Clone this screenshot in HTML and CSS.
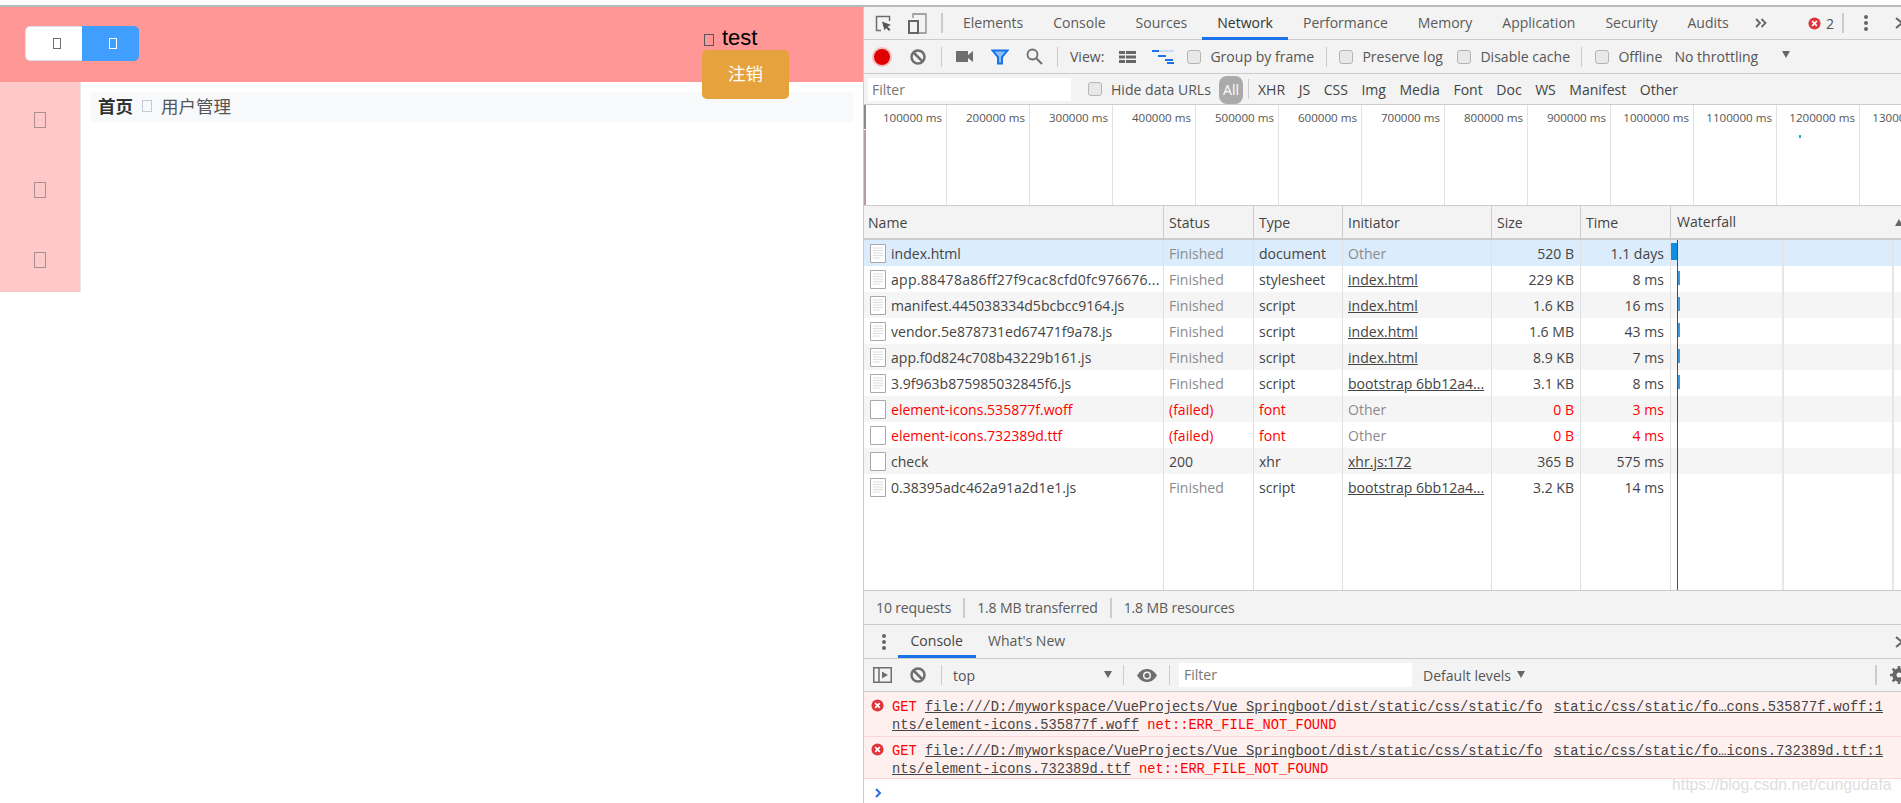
FILE: index.html
```html
<!DOCTYPE html>
<html lang="zh">
<head>
<meta charset="utf-8">
<title>用户管理</title>
<link rel="stylesheet" href="styles.css">
</head>
<body>
<svg class="sprite" aria-hidden="true">
  <symbol id="doc" viewBox="0 0 16 19"><path d="M.5.5h15v18H.5z" fill="#fff" stroke="#a9a9a9"/><path d="M3 4h10M3 6.500h10M3 9h10M3 11.500h10M3 14h7" stroke="#dcdcdc"/></symbol>
  <symbol id="blank" viewBox="0 0 16 19"><path d="M.5.5h15v18H.5z" fill="#fff" stroke="#a9a9a9"/></symbol>
  <symbol id="clear" viewBox="0 0 16 16"><circle cx="8" cy="8" r="6.500" fill="none" stroke="#6e6e6e" stroke-width="2.500"/><path d="M3.500 3.500l9 9" stroke="#6e6e6e" stroke-width="2.500"/></symbol>
  <symbol id="err" viewBox="0 0 14 14"><circle cx="7" cy="7" r="6.500" fill="#e0343c"/><path d="M4.500 4.500l5 5M9.500 4.500l-5 5" stroke="#fff" stroke-width="1.800"/></symbol>
  <symbol id="dots" viewBox="0 0 4 16"><circle cx="2" cy="2" r="2" fill="#666"/><circle cx="2" cy="8" r="2" fill="#666"/><circle cx="2" cy="14" r="2" fill="#666"/></symbol>
  <symbol id="close" viewBox="0 0 10 12"><path d="M1 1l6 5-6 5" fill="none" stroke="#666" stroke-width="2"/></symbol>
</svg>

<div class="topline"></div>
<div class="screen">
  <section class="app">
    <header class="app-head">
      <div class="btn-group">
        <span class="seg seg-white"><i class="tofu tofu-btn"></i></span>
        <span class="seg seg-blue"><i class="tofu tofu-btn tofu-white"></i></span>
      </div>
      <div class="user">
        <div class="user-name"><i class="tofu tofu-user"></i><span>test</span></div>
        <button class="logout">注销</button>
      </div>
    </header>
    <div class="app-body">
      <nav class="side">
        <div class="side-item"><i class="tofu tofu-side"></i></div>
        <div class="side-item"><i class="tofu tofu-side"></i></div>
        <div class="side-item"><i class="tofu tofu-side"></i></div>
      </nav>
      <main class="content">
        <div class="crumb"><b>首页</b><i class="tofu tofu-crumb"></i><span>用户管理</span></div>
      </main>
    </div>
  </section>

  <section class="devtools">
    <div class="bar tabs">
      <svg class="ic-inspect" width="17" height="17" viewBox="0 0 17 17"><path d="M6 15.500H1.500v-14h13V6" fill="none" stroke="#6e6e6e" stroke-width="1.500"/><path d="M7 6.500l9 3.500-3.500 1.500 3 3-1.500 1.500-3-3L9.500 15.500z" fill="#555"/></svg>
      <svg class="ic-device" width="19" height="21" viewBox="0 0 19 21"><path d="M5 5V1h13v19H11" fill="none" stroke="#8a8a8a" stroke-width="1.300"/><rect x="1" y="8" width="9" height="12" fill="none" stroke="#666" stroke-width="2"/></svg>
      <i class="sep sep-tall sep-tabs"></i>
      <span class="tab">Elements</span>
      <span class="tab">Console</span>
      <span class="tab">Sources</span>
      <span class="tab tab-on">Network</span>
      <span class="tab">Performance</span>
      <span class="tab">Memory</span>
      <span class="tab">Application</span>
      <span class="tab">Security</span>
      <span class="tab">Audits</span>
      <svg class="ic-more" width="12" height="10" viewBox="0 0 12 10"><path d="M1 1l4 4-4 4M6.500 1l4 4-4 4" fill="none" stroke="#666" stroke-width="1.800"/></svg>
      <svg class="ic-err-top" width="13" height="13"><use href="#err"/></svg>
      <span class="err-count">2</span>
      <i class="sep sep-tall sep-err"></i>
      <svg class="ic-dots" width="4" height="16"><use href="#dots"/></svg>
      <svg class="ic-close" width="10" height="12"><use href="#close"/></svg>
    </div>

    <div class="bar toolbar">
      <span class="record"></span>
      <svg class="ic-clear" width="16" height="16"><use href="#clear"/></svg>
      <i class="sep sep-clear"></i>
      <svg class="ic-camera" width="17" height="11" viewBox="0 0 17 11"><path d="M0 0h12v11H0zM12 4l5-4v11l-5-4z" fill="#6e6e6e"/></svg>
      <svg class="ic-funnel" width="18" height="16" viewBox="0 0 18 16"><path d="M1.500 1.500h15L11 8v6.500H7V8z" fill="#8fbdf5" stroke="#1a73e8" stroke-width="2"/></svg>
      <svg class="ic-search" width="17" height="17" viewBox="0 0 17 17"><circle cx="6.500" cy="6.500" r="5" fill="none" stroke="#6e6e6e" stroke-width="1.800"/><path d="M10.500 10.500l5.500 5.500" stroke="#6e6e6e" stroke-width="2"/></svg>
      <i class="sep sep-search"></i>
      <span class="lbl lbl-view">View:</span>
      <svg class="ic-list" width="17" height="12" viewBox="0 0 17 12"><path d="M0 0h6v3H0zM7 0h10v3H7zM0 4.500h6v3H0zM7 4.500h10v3H7zM0 9h6v3H0zM7 9h10v3H7z" fill="#666"/></svg>
      <svg class="ic-wf" width="22" height="14" viewBox="0 0 22 14"><path d="M0 0h22v2H0z" fill="#c6dcf8"/><path d="M0 0h7v2H0zM6 5h8v2H6zM13 9h8v2h-8zM15 12h7v2h-7z" fill="#1a73e8"/></svg>
      <label class="check check-group"><i class="box"></i>Group by frame</label>
      <i class="sep sep-group"></i>
      <label class="check check-log"><i class="box"></i>Preserve log</label>
      <label class="check check-cache"><i class="box"></i>Disable cache</label>
      <i class="sep sep-cache"></i>
      <label class="check check-off"><i class="box"></i>Offline</label>
      <span class="lbl lbl-throttle">No throttling</span>
      <i class="tri tri-throttle"></i>
    </div>

    <div class="bar filterbar">
      <span class="input input-net">Filter</span>
      <label class="check check-hide"><i class="box"></i>Hide data URLs</label>
      <span class="all">All</span>
      <i class="sep sep-all"></i>
      <span class="ftype ftype-first">XHR</span><span class="ftype">JS</span><span class="ftype">CSS</span><span class="ftype">Img</span><span class="ftype">Media</span><span class="ftype">Font</span><span class="ftype">Doc</span><span class="ftype">WS</span><span class="ftype">Manifest</span><span class="ftype">Other</span>
    </div>

    <div class="overview">
      <span class="mark mark-gray"></span><span class="mark mark-pink"></span><span class="blip"></span>
      <div class="ov-cell">100000 ms</div><div class="ov-cell">200000 ms</div><div class="ov-cell">300000 ms</div><div class="ov-cell">400000 ms</div><div class="ov-cell">500000 ms</div><div class="ov-cell">600000 ms</div><div class="ov-cell">700000 ms</div><div class="ov-cell">800000 ms</div><div class="ov-cell">900000 ms</div><div class="ov-cell">1000000 ms</div><div class="ov-cell">1100000 ms</div><div class="ov-cell">1200000 ms</div><div class="ov-cell">1300000 ms</div>
    </div>

    <div class="table">
      <div class="row head">
        <div class="c c-name">Name</div><div class="c">Status</div><div class="c">Type</div><div class="c">Initiator</div><div class="c">Size</div><div class="c">Time</div><div class="c c-wf">Waterfall<i class="sort"></i></div>
      </div>
      <div class="rows">
        <span class="wf-line wf-a"></span><span class="wf-line wf-b"></span><span class="wf-load"></span>
        <div class="row sel">
          <div class="c c-name"><svg class="fi" width="16" height="19"><use href="#doc"/></svg>index.html</div><div class="c dim">Finished</div><div class="c">document</div><div class="c dim">Other</div><div class="c num">520 B</div><div class="c num">1.1 days</div><div class="c c-wf"><i class="bar-mark bar-first"></i></div>
        </div>
        <div class="row">
          <div class="c c-name"><svg class="fi" width="16" height="19"><use href="#doc"/></svg><span class="clip">app.88478a86ff27f9cac8cfd0fc976676...</span></div><div class="c dim">Finished</div><div class="c">stylesheet</div><div class="c"><u>index.html</u></div><div class="c num">229 KB</div><div class="c num">8 ms</div><div class="c c-wf"><i class="bar-mark"></i></div>
        </div>
        <div class="row alt">
          <div class="c c-name"><svg class="fi" width="16" height="19"><use href="#doc"/></svg>manifest.445038334d5bcbcc9164.js</div><div class="c dim">Finished</div><div class="c">script</div><div class="c"><u>index.html</u></div><div class="c num">1.6 KB</div><div class="c num">16 ms</div><div class="c c-wf"><i class="bar-mark"></i></div>
        </div>
        <div class="row">
          <div class="c c-name"><svg class="fi" width="16" height="19"><use href="#doc"/></svg>vendor.5e878731ed67471f9a78.js</div><div class="c dim">Finished</div><div class="c">script</div><div class="c"><u>index.html</u></div><div class="c num">1.6 MB</div><div class="c num">43 ms</div><div class="c c-wf"><i class="bar-mark"></i></div>
        </div>
        <div class="row alt">
          <div class="c c-name"><svg class="fi" width="16" height="19"><use href="#doc"/></svg>app.f0d824c708b43229b161.js</div><div class="c dim">Finished</div><div class="c">script</div><div class="c"><u>index.html</u></div><div class="c num">8.9 KB</div><div class="c num">7 ms</div><div class="c c-wf"><i class="bar-mark"></i></div>
        </div>
        <div class="row">
          <div class="c c-name"><svg class="fi" width="16" height="19"><use href="#doc"/></svg>3.9f963b875985032845f6.js</div><div class="c dim">Finished</div><div class="c">script</div><div class="c"><u>bootstrap 6bb12a4...</u></div><div class="c num">3.1 KB</div><div class="c num">8 ms</div><div class="c c-wf"><i class="bar-mark"></i></div>
        </div>
        <div class="row alt fail">
          <div class="c c-name"><svg class="fi" width="16" height="19"><use href="#blank"/></svg>element-icons.535877f.woff</div><div class="c">(failed)</div><div class="c">font</div><div class="c dim">Other</div><div class="c num">0 B</div><div class="c num">3 ms</div><div class="c c-wf"></div>
        </div>
        <div class="row fail">
          <div class="c c-name"><svg class="fi" width="16" height="19"><use href="#blank"/></svg>element-icons.732389d.ttf</div><div class="c">(failed)</div><div class="c">font</div><div class="c dim">Other</div><div class="c num">0 B</div><div class="c num">4 ms</div><div class="c c-wf"></div>
        </div>
        <div class="row alt">
          <div class="c c-name"><svg class="fi" width="16" height="19"><use href="#blank"/></svg>check</div><div class="c">200</div><div class="c">xhr</div><div class="c"><u>xhr.js:172</u></div><div class="c num">365 B</div><div class="c num">575 ms</div><div class="c c-wf"></div>
        </div>
        <div class="row">
          <div class="c c-name"><svg class="fi" width="16" height="19"><use href="#doc"/></svg>0.38395adc462a91a2d1e1.js</div><div class="c dim">Finished</div><div class="c">script</div><div class="c"><u>bootstrap 6bb12a4...</u></div><div class="c num">3.2 KB</div><div class="c num">14 ms</div><div class="c c-wf"></div>
        </div>
        <div class="row filler">
          <div class="c c-name"></div><div class="c"></div><div class="c"></div><div class="c"></div><div class="c"></div><div class="c"></div><div class="c c-wf"></div>
        </div>
      </div>
    </div>

    <div class="bar summary">
      <span class="sum">10 requests</span><i class="sep sep-sum"></i><span class="sum">1.8 MB transferred</span><i class="sep sep-sum"></i><span class="sum">1.8 MB resources</span>
    </div>

    <div class="bar drawer">
      <svg class="ic-dots-d" width="4" height="16"><use href="#dots"/></svg>
      <span class="dtab dtab-on">Console</span>
      <span class="dtab">What's New</span>
      <svg class="ic-close-d" width="10" height="12"><use href="#close"/></svg>
    </div>

    <div class="bar contool">
      <svg class="ic-sidebar" width="19" height="16" viewBox="0 0 19 16"><path d="M.750.750h17.500v14.500H.750zM6 .750v14.500" fill="none" stroke="#6e6e6e" stroke-width="1.500"/><path d="M9 4.500l6 3.500-6 3.500z" fill="#6e6e6e"/></svg>
      <svg class="ic-clear ic-clear-c" width="16" height="16"><use href="#clear"/></svg>
      <i class="sep sep-clear"></i>
      <span class="lbl lbl-top">top</span>
      <i class="tri tri-top"></i>
      <i class="sep sep-top"></i>
      <svg class="ic-eye" width="20" height="13" viewBox="0 0 20 13"><path d="M0 6.500C3 2 6 0 10 0s7 2 10 6.500C17 11 14 13 10 13S3 11 0 6.500z" fill="#6e6e6e"/><circle cx="10" cy="6.500" r="4" fill="#f3f3f3"/><circle cx="10" cy="6.500" r="2.500" fill="#6e6e6e"/></svg>
      <i class="sep sep-eye"></i>
      <span class="input input-con">Filter</span>
      <span class="lbl lbl-levels">Default levels</span>
      <i class="tri tri-levels"></i>
      <i class="sep sep-gear"></i>
      <svg class="ic-gear" width="18" height="18" viewBox="0 0 18 18"><circle cx="9" cy="9" r="5" fill="none" stroke="#666" stroke-width="3.500"/><path d="M9 0v18M0 9h18M2.600 2.600l12.800 12.800M15.400 2.600L2.600 15.400" stroke="#666" stroke-width="2.500"/><circle cx="9" cy="9" r="2.500" fill="#f3f3f3"/></svg>
    </div>

    <div class="console">
      <div class="msg msg-first">
        <svg class="ic-err" width="13" height="13"><use href="#err"/></svg>
        <div class="msg-body">
          <div class="msg-line"><span><span class="red">GET</span> <u>file:///D:/myworkspace/VueProjects/Vue_Springboot/dist/static/css/static/fo</u></span><u>static/css/static/fo…cons.535877f.woff:1</u></div>
          <div><u>nts/element-icons.535877f.woff</u> <span class="red">net::ERR_FILE_NOT_FOUND</span></div>
        </div>
      </div>
      <div class="msg">
        <svg class="ic-err" width="13" height="13"><use href="#err"/></svg>
        <div class="msg-body">
          <div class="msg-line"><span><span class="red">GET</span> <u>file:///D:/myworkspace/VueProjects/Vue_Springboot/dist/static/css/static/fo</u></span><u>static/css/static/fo…icons.732389d.ttf:1</u></div>
          <div><u>nts/element-icons.732389d.ttf</u> <span class="red">net::ERR_FILE_NOT_FOUND</span></div>
        </div>
      </div>
      <div class="prompt">
        <svg width="7" height="10" viewBox="0 0 7 10"><path d="M1 1l4 4-4 4" fill="none" stroke="#2a6fdb" stroke-width="2"/></svg>
      </div>
      <span class="watermark">https://blog.csdn.net/cungudafa</span>
    </div>
  </section>
</div>
</body>
</html>
```

FILE: styles.css
```css
* { box-sizing: border-box; }
html, body { margin: 0; padding: 0; }
body {
  width: 1901px;
  height: 803px;
  overflow: hidden;
  background: #fff;
  font-family: "Open Sans", "Noto Sans", "Noto Sans CJK SC", sans-serif;
}
.sprite { display: none; }
i { font-style: normal; }

.topline { height: 7px; border-bottom: 2px solid #bbb; margin-top: 0; }
.screen { display: flex; height: 796px; }

/* ---------- left app ---------- */
.app { flex: 0 0 863px; font-family: "Noto Sans CJK SC", "Noto Sans", sans-serif; }
.app-head {
  height: 75px;
  background: #ff9797;
  display: flex;
  align-items: flex-start;
  padding: 19px 74px 0 25px;
}
.btn-group {
  display: flex;
  width: 114px;
  height: 35px;
  border-radius: 5px;
  overflow: hidden;
}
.seg { display: flex; align-items: center; justify-content: center; height: 35px; }
.seg-white { width: 57px; background: #fff; border: 1px solid #dcdfe6; border-right: 0; border-radius: 5px 0 0 5px; padding-left: 6px; }
.seg-blue { width: 57px; background: #409eff; padding-left: 5px; }
.tofu { display: block; border: 1px solid #6f6f78; flex: none; }
.tofu-btn { width: 8px; height: 11px; }
.tofu-white { border-color: #fff; }
.user { margin-left: auto; width: 87px; position: relative; z-index: 1; }
.user-name {
  display: flex;
  align-items: center;
  height: 24px;
  padding-left: 2px;
  font-family: "Liberation Sans", "Noto Sans", sans-serif;
  font-size: 22px;
  color: #000;
  gap: 8px;
}
.tofu-user { width: 10px; height: 12px; border-color: #5b5560; margin-top: 4px; }
.logout {
  display: block;
  width: 87px;
  height: 49px;
  border: 0;
  border-radius: 5px;
  background: #e6a23c;
  color: #fff;
  font: 17.500px "Noto Sans CJK SC", sans-serif;
  padding: 0 0 4px;
}
.app-body { display: flex; align-items: flex-start; }
.side { width: 81px; height: 210px; background: #ffc8c8; border-right: 1px solid #e6e6e6; }
.side-item { height: 70px; padding-top: 6px; display: flex; align-items: center; justify-content: center; }
.tofu-side { width: 12px; height: 16px; border-color: #a88f92; }
.content { flex: 1; padding: 10px 10px 0; }
.crumb {
  height: 30px;
  background: #f8f9fb;
  display: flex;
  align-items: center;
  padding: 0 0 3px 7px;
  font-size: 17.500px;
  color: #555;
}
.crumb b { color: #303133; font-weight: 700; }
.tofu-crumb { width: 10px; height: 12px; margin: 0 9px; border-color: #c6c9dc; }

/* ---------- devtools ---------- */
.devtools {
  flex: 0 0 1038px;
  height: 796px;
  background: #fff;
  border-left: 1px solid #ccc;
  font-size: 14.050px;
  color: #555;
  overflow: hidden;
}
.bar { display: flex; align-items: center; background: #f3f3f3; border-bottom: 1px solid #ccc; white-space: nowrap; }
.bar > * { flex: none; }
svg { flex: none; display: block; }
.sep { display: block; flex: none; width: 1px; height: 20px; background: #ccc; }
.sep-tall { width: 2px; }

.tabs { height: 33px; padding-left: 11px; }
.ic-device { margin-left: 16px; }
.sep-tabs { margin: 0 5px 0 14px; }
.tab { align-self: flex-end; height: 33px; margin-bottom: -1px; line-height: 32px; padding: 0 15px; color: #5a5a5a; font-size: 14px; }
.tab-on { color: #333; box-shadow: inset 0 -3px 0 #1a73e8; }
.ic-more { margin-left: 11px; }
.ic-err-top { margin-left: auto; }
.err-count { margin-left: 5px; width: 9px; }
.sep-err { margin-left: 7px; }
.ic-dots { margin-left: 20px; }
.ic-close { margin-left: 27px; margin-right: -4px; }

.toolbar { height: 34px; padding-left: 10px; }
.record { width: 16px; height: 16px; border-radius: 50%; background: #e00000; box-shadow: 0 0 0 2px #f3c0c0; margin-left: 0; }
.ic-clear { margin-left: 20px; }
.sep-clear { margin: 0 0 0 15px; }
.ic-camera { margin-left: 14px; }
.ic-funnel { margin-left: 18px; }
.ic-search { margin-left: 17px; }
.sep-search { margin-left: 14px; }
.lbl-view { margin-left: 12px; }
.ic-list { margin-left: 15px; }
.ic-wf { margin-left: 16px; }
.check { display: flex; align-items: center; gap: 9px; }
.box { display: block; flex: none; width: 14px; height: 14px; border: 1px solid #b5b5b5; border-radius: 3px; background: #e8e8e8; }
.check-group { margin-left: 13px; width: 139px; }
.check-log { margin-left: 12px; width: 103px; }
.check-cache { margin-left: 15px; width: 112px; }
.sep-cache { margin-left: 12px; }
.check-off { margin-left: 13px; width: 66px; }
.lbl-throttle { margin-left: 13px; width: 108px; }
.tri { display: block; flex: none; width: 0; height: 0; border-left: 4.500px solid transparent; border-right: 4.500px solid transparent; border-top: 7px solid #666; }
.tri-throttle { margin-top: -4px; }

.filterbar { height: 31px; padding-left: 4px; }
.input { display: block; flex: none; background: #fff; color: #777; padding-left: 4px; }
.input-net { width: 203px; height: 23px; line-height: 24px; }
.check-hide { margin-left: 17px; width: 131px; }
.all { flex: none; width: 24px; height: 28px; line-height: 27px; text-align: center; background: #aaa; color: #fff; border-radius: 8px; margin-top: 1px; }
.sep-all { margin: 0 0 0 5px; }
.ftype { padding: 1px 0 0 13.500px; color: #444; }
.ftype-first { padding-left: 9px; }

.overview { display: flex; height: 101px; position: relative; overflow: hidden; border-bottom: 1px solid #ccc; }
.ov-cell { flex: 0 0 83px; border-right: 1px solid #e2e2e2; text-align: right; padding: 5px 4px 0 0; font-size: 11.600px; color: #555; white-space: nowrap; }
.mark { position: absolute; left: 0; width: 2px; }
.mark-gray { top: 0; height: 24px; background: #8a8a8a; }
.mark-pink { top: 25px; height: 76px; background: #bb9aa8; }
.blip { position: absolute; left: 935px; top: 30px; width: 2px; height: 3px; background: #1fb0bd; }

.table { height: 385px; display: flex; flex-direction: column; border-bottom: 1px solid #ccc; }
.row {
  display: grid;
  grid-template-columns: 300px 90px 89px 149px 89px 90px 1fr;
  height: 26px;
  line-height: 25px;
}
.head { height: 34px; line-height: 31px; background: #f3f3f3; border-bottom: 2px solid #ccc; color: #444; flex: none; }
.rows { flex: 1; position: relative; display: flex; flex-direction: column; }
.rows .row { flex: none; }
.c { border-right: 1px solid #e0e0e0; padding: 1px 0 0 5px; white-space: nowrap; overflow: hidden; color: #444; }
.c-name { display: flex; align-items: center; padding-left: 6px; gap: 5px; }
.clip { letter-spacing: 0.260px; }
.head .c-name { padding-left: 4px; }
.c-wf { border-right: 0; padding-left: 6px; position: relative; overflow: visible; }
.head .c { border-right-color: #ccc; }
.head .c-wf { line-height: 29px; }
.sel { background: #dbecfd; }
.alt { background: #f5f5f5; }
.dim { color: #8b8b8b; }
.num { text-align: right; padding: 1px 6px 0 0; }
.fail .c { color: #f00; }
.fail .dim { color: #8b8b8b; }
.rows .filler { flex: 1; height: auto; }
.fi { flex: none; margin-top: -1px; }
u { text-decoration: underline; }
.sort { position: absolute; right: -2px; top: 13px; width: 0; height: 0; border-left: 4px solid transparent; border-right: 4px solid transparent; border-bottom: 7px solid #666; }
.wf-line { position: absolute; top: 0; bottom: 0; width: 2px; background: #e6e6e6; z-index: 1; }
.wf-a { left: 918px; }
.wf-b { left: 1028px; }
.wf-load { position: absolute; top: 0; bottom: 0; left: 813px; width: 1px; background: #8c2f4a; z-index: 2; }
.bar-mark { position: absolute; left: 6px; top: 5px; width: 3px; height: 14px; background: #3f97de; }
.bar-first { left: 0; top: 3px; height: 17px; width: 7px; background: #0f8fe3; }

.summary { height: 34px; padding-left: 12px; color: #5a5a5a; }
.sum { letter-spacing: -0.150px; }
.sep-sum { margin: 0 12px; width: 2px; }

.drawer { height: 34px; position: relative; }
.ic-dots-d { margin-left: 18px; }
.dtab { align-self: flex-end; height: 33px; line-height: 31px; padding: 0 12.500px; color: #5a5a5a; }
.dtab-on { margin-left: 12px; color: #444; box-shadow: inset 0 -3px 0 #1a73e8; }
.ic-close-d { margin-left: auto; margin-right: -4px; }

.contool { height: 33px; padding-left: 9px; }
.ic-clear-c { margin-left: 18px; }
.lbl-top { margin-left: 11px; width: 151px; }
.tri-top { margin-top: -2px; }
.sep-top { margin-left: 11px; }
.ic-eye { margin-left: 13px; }
.sep-eye { margin-left: 12px; }
.input-con { margin-left: 9px; width: 233px; height: 24px; line-height: 24px; padding-left: 5px; }
.lbl-levels { margin-left: 11px; width: 94px; }
.tri-levels { margin-top: -2px; }
.sep-gear { margin-left: 350px; width: 2px; }
.ic-gear { margin-left: 13px; }

.console {
  position: relative;
  flex: 1;
  font-family: "Liberation Mono", "DejaVu Sans Mono", monospace;
  font-size: 13.730px;
  line-height: 18px;
  color: #444;
  height: 112px;
}
.msg { display: flex; height: 42px; background: #fff0f0; border-bottom: 1px solid #ffd6d6; padding: 6px 18px 0 7px; }
.msg-first { height: 45px; padding-top: 7px; }
.ic-err { margin: 0 8px 0 0; }
.msg-body { flex: 1; }
.msg-line { display: flex; justify-content: space-between; }
.red { color: #f00; }
.prompt { padding: 9px 0 0 11px; }
.watermark {
  position: absolute;
  left: 808px;
  top: 84px;
  font: 15.800px "Liberation Sans", sans-serif;
  color: #dedede;
  white-space: nowrap;
}
```
